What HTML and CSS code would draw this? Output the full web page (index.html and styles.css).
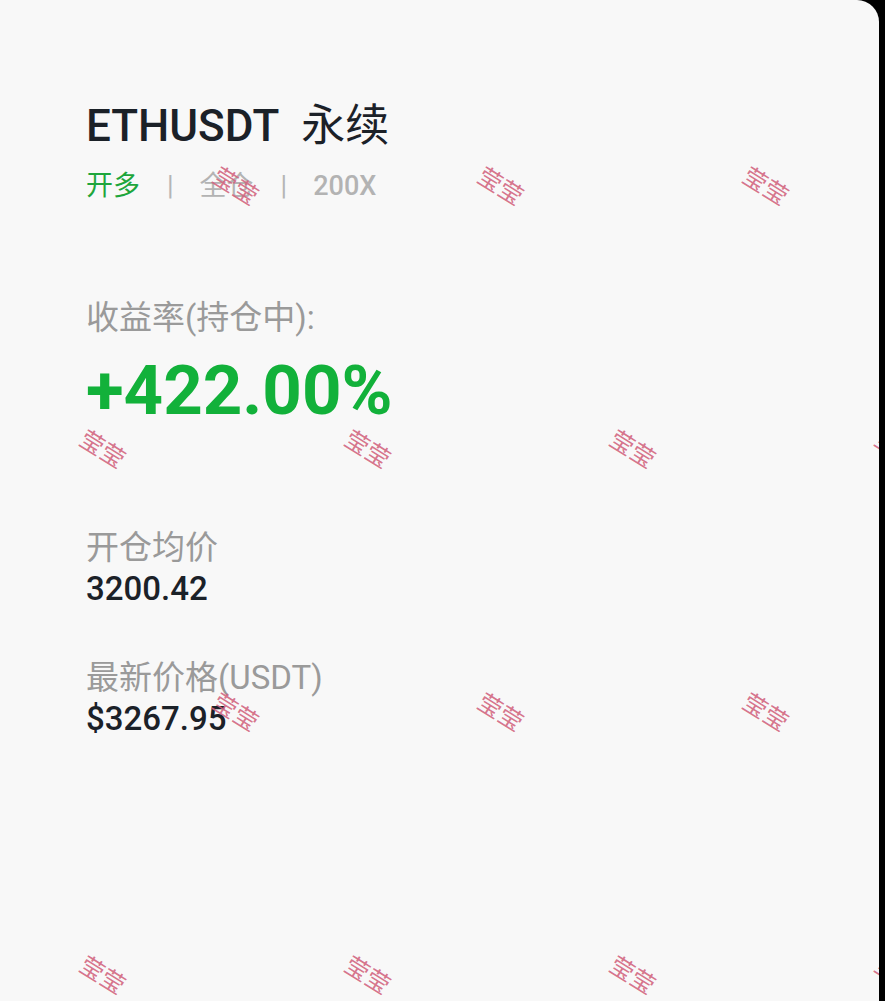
FILE: index.html
```html
<!DOCTYPE html>
<html lang="zh">
<head>
    <meta charset="UTF-8">
    <meta name="viewport" content="width=device-width, initial-scale=1.0">
    <title>ETHUSDT 永续</title>
    <link rel="stylesheet" href="styles.css">
</head>
<body>
    <div class="card">
        <!-- Contract header -->
        <div class="symbol">ETHUSDT <span class="symbol-type">永续</span></div>
        <div class="tags">
            <span class="tag-long">开多</span>
            <span class="tag-sep">|</span>
            <span class="tag-mode">全仓</span>
            <span class="tag-sep">|</span>
            <span class="tag-lev">200X</span>
        </div>

        <!-- Profit -->
        <div class="label roi-label">收益率(持仓中):</div>
        <div class="roi">+422.00%</div>

        <!-- Prices -->
        <div class="label open-label">开仓均价</div>
        <div class="value">3200.42</div>

        <div class="label last-label">最新价格(USDT)</div>
        <div class="value">$3267.95</div>

        <!-- Watermark overlay -->
        <div class="watermarks">
            <div class="wm-row wm-row-a"><span>莹莹</span><span>莹莹</span><span>莹莹</span></div>
            <div class="wm-row wm-row-b"><span>莹莹</span><span>莹莹</span><span>莹莹</span><span>莹莹</span></div>
            <div class="wm-row wm-row-a"><span>莹莹</span><span>莹莹</span><span>莹莹</span></div>
            <div class="wm-row wm-row-b"><span>莹莹</span><span>莹莹</span><span>莹莹</span><span>莹莹</span></div>
        </div>
    </div>
</body>
</html>
```

FILE: styles.css
```css
body {
    margin: 0;
    background: #000;
    font-family: Roboto, "Noto Sans CJK SC", sans-serif;
    overflow: hidden;
}

.card {
    position: relative;
    width: 879px;
    height: 1001px;
    background: #f8f8f8;
    border-top-right-radius: 22px;
    padding: 96px 0 0 86px;
    box-sizing: border-box;
    overflow: hidden;
}

.symbol {
    font-size: 44px;
    line-height: 60px;
    font-weight: 500;
    color: #1b2128;
}

.symbol-type {
    margin-left: 12px;
    font-weight: 400;
}

.tags {
    display: flex;
    align-items: center;
    font-size: 27px;
    line-height: 40px;
    margin-top: 10px;
}

.tag-long {
    color: #1ea63c;
}

.tag-sep {
    color: #b5b5b5;
    margin: 0 26px 0 27px;
}

.tag-mode {
    color: #b3b3b3;
}

.tag-lev {
    color: #b3b3b3;
    font-weight: 500;
}

.label {
    font-size: 33px;
    line-height: 44px;
    color: #9a9a9a;
}

.roi-label {
    margin-top: 90px;
}

.roi {
    font-size: 69px;
    line-height: 84px;
    font-weight: 700;
    color: #12b13a;
    margin-top: 9px;
}

.open-label {
    margin-top: 93px;
}

.last-label {
    margin-top: 48px;
}

.value {
    font-size: 33px;
    line-height: 38px;
    font-weight: 500;
    color: #1b2128;
}

/* Watermark overlay */
.watermarks {
    position: absolute;
    top: 53px;
    left: 0;
    right: 0;
    pointer-events: none;
}

.wm-row {
    display: flex;
    height: 263px;
    align-items: center;
}

.wm-row span {
    flex: 0 0 265px;
    text-align: center;
    font-size: 24px;
    color: rgba(210, 100, 126, 0.9);
    transform: rotate(32deg);
}

.wm-row-a {
    margin-left: 104px;
}

.wm-row-b {
    margin-left: -29px;
}
```
